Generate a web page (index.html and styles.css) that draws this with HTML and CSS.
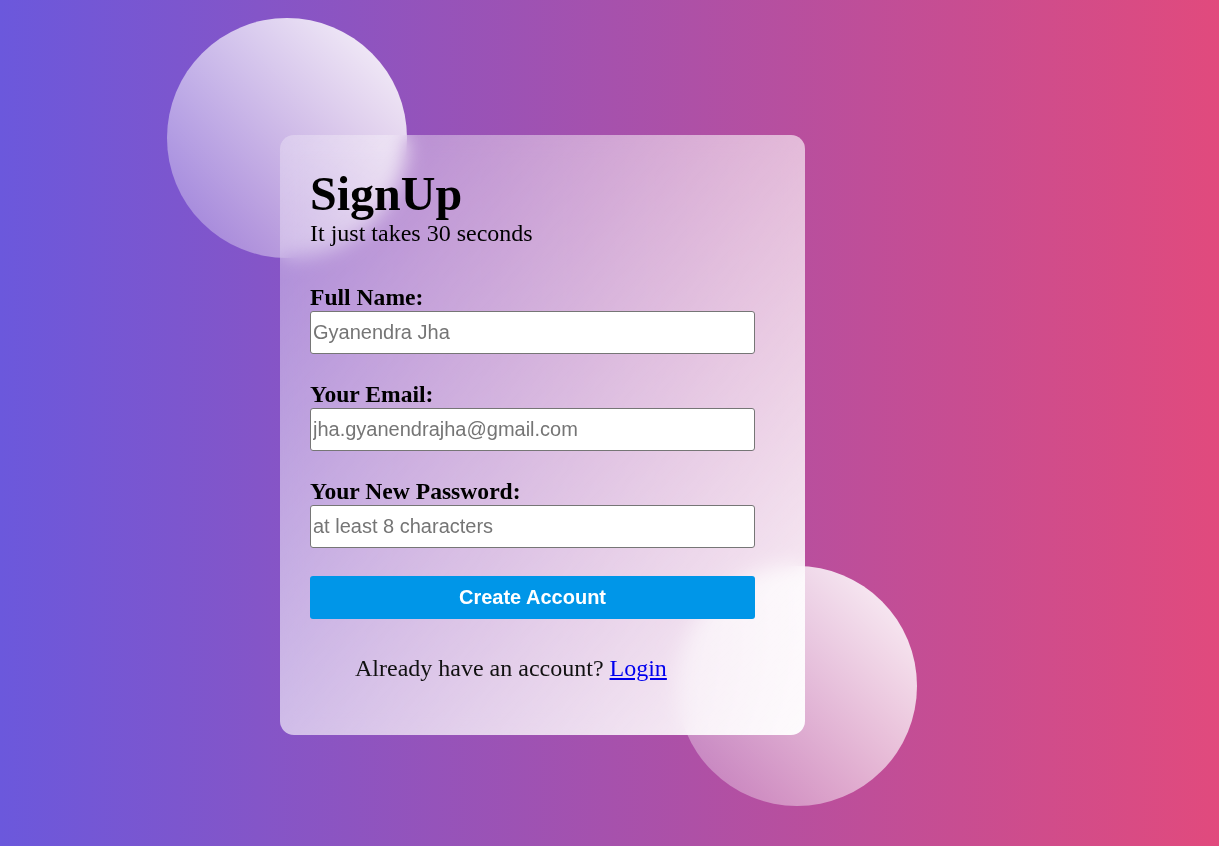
FILE: index.html
```html
<!DOCTYPE html>
<html lang="en">
<head>
<meta charset="utf-8">
<title>SignUp</title>
<link rel="stylesheet" href="styles.css">
</head>
<body>
  <main class="page">
    <div class="stage">
      <div class="circle circle-top"></div>
      <div class="circle circle-bottom"></div>
      <section class="card">
        <h1 class="title">SignUp</h1>
        <p class="subtitle">It just takes 30 seconds</p>
        <form class="form">
          <div class="field">
            <label class="label" for="name">Full Name:</label>
            <input class="input" id="name" type="text" placeholder="Gyanendra Jha">
          </div>
          <div class="field">
            <label class="label" for="email">Your Email:</label>
            <input class="input" id="email" type="email" placeholder="jha.gyanendrajha@gmail.com">
          </div>
          <div class="field">
            <label class="label" for="pass">Your New Password:</label>
            <input class="input" id="pass" type="password" placeholder="at least 8 characters">
          </div>
          <button class="btn" type="button">Create Account</button>
        </form>
        <p class="login">Already have an account? <a href="#" class="login-link">Login</a></p>
      </section>
    </div>
  </main>
</body>
</html>
```

FILE: styles.css
```css
* { box-sizing: border-box; }

html, body {
  margin: 0;
  height: 100%;
}

body {
  background: linear-gradient(to right, #6b58dc, #e14a7d);
  font-family: "Liberation Serif", "Times New Roman", serif;
  color: #000;
  overflow: hidden;
}

.page {
  padding: 135px 0 0 280px;
}

.stage {
  position: relative;
  width: 525px;
  height: 600px;
}

.circle {
  position: absolute;
  width: 240px;
  height: 240px;
  border-radius: 50%;
  background: linear-gradient(to top right, rgba(255,255,255,0.22), rgba(255,255,255,0.96));
}

.circle-top {
  left: -113px;
  top: -117px;
}

.circle-bottom {
  left: 397px;
  top: 431px;
}

.card {
  position: relative;
  z-index: 1;
  width: 525px;
  height: 600px;
  padding: 32px 50px 0 30px;
  border-radius: 14px;
  background: linear-gradient(to bottom right, rgba(255,255,255,0.28), rgba(255,255,255,0.95));
  backdrop-filter: blur(10px);
  -webkit-backdrop-filter: blur(10px);
}

.title {
  margin: 0;
  font-size: 48px;
  font-weight: bold;
  line-height: 53px;
}

.subtitle {
  margin: 0;
  font-size: 24px;
  line-height: 27px;
}

.form {
  margin-top: 37px;
  display: flex;
  flex-direction: column;
}

.field {
  display: flex;
  flex-direction: column;
  margin-bottom: 27px;
}

.label {
  display: block;
  font-size: 23.6px;
  font-weight: bold;
  line-height: 27px;
}

.input {
  width: 445px;
  height: 43px;
  margin: 0;
  padding: 1px 2px;
  border: 1px solid #767676;
  border-radius: 3px;
  background: #fff;
  font-family: "Liberation Sans", Arial, sans-serif;
  font-size: 20px;
  color: #000;
}

.input::placeholder {
  color: #757575;
}

.btn {
  width: 445px;
  height: 43px;
  margin: 1px 0 0;
  border: none;
  border-radius: 3px;
  background: #0096e8;
  color: #fff;
  font-family: "Liberation Sans", Arial, sans-serif;
  font-size: 20px;
  font-weight: bold;
  cursor: pointer;
}

.login {
  margin: 36px 0 0 45px;
  font-size: 24px;
  line-height: 27px;
  color: #111;
}

.login-link {
  color: #0000ee;
  text-decoration: underline;
}
```
